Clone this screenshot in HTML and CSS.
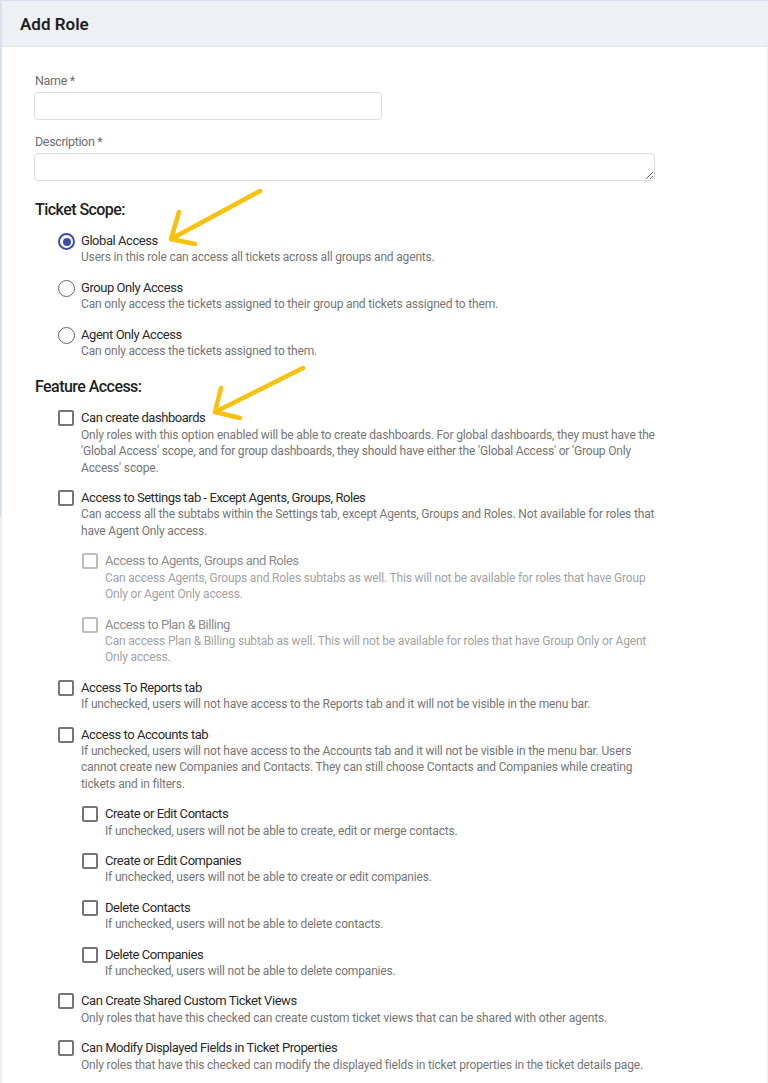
FILE: index.html
```html
<!DOCTYPE html>
<html lang="en">
<head>
    <meta charset="UTF-8">
    <meta name="viewport" content="width=device-width, initial-scale=1.0">
    <title>Add Role</title>
    <link rel="stylesheet" href="styles.css">
</head>
<body>
    <div class="page">
        <div class="header">
            <h1>Add Role</h1>
        </div>

        <form class="role-form">
            <div class="form-group">
                <label class="field-label" for="name">Name *</label>
                <input class="text-input" type="text" id="name">
            </div>
            <div class="form-group">
                <label class="field-label" for="description">Description *</label>
                <textarea class="text-area" id="description" rows="1"></textarea>
            </div>

            <h2 class="section-title">Ticket Scope:</h2>
            <div class="option-list">
                <label class="option">
                    <span class="radio checked"></span>
                    <span class="option-text">
                        <span class="option-title">Global Access</span>
                        <span class="option-desc">Users in this role can access all tickets across all groups and agents.</span>
                    </span>
                </label>
                <label class="option">
                    <span class="radio"></span>
                    <span class="option-text">
                        <span class="option-title">Group Only Access</span>
                        <span class="option-desc">Can only access the tickets assigned to their group and tickets assigned to them.</span>
                    </span>
                </label>
                <label class="option">
                    <span class="radio"></span>
                    <span class="option-text">
                        <span class="option-title">Agent Only Access</span>
                        <span class="option-desc">Can only access the tickets assigned to them.</span>
                    </span>
                </label>
            </div>

            <h2 class="section-title feature">Feature Access:</h2>
            <div class="option-list">
                <label class="option">
                    <span class="checkbox"></span>
                    <span class="option-text">
                        <span class="option-title">Can create dashboards</span>
                        <span class="option-desc">Only roles with this option enabled will be able to create dashboards. For global dashboards, they must have the 'Global Access' scope, and for group dashboards, they should have either the 'Global Access' or 'Group Only Access' scope.</span>
                    </span>
                </label>
                <label class="option">
                    <span class="checkbox"></span>
                    <span class="option-text">
                        <span class="option-title">Access to Settings tab - Except Agents, Groups, Roles</span>
                        <span class="option-desc">Can access all the subtabs within the Settings tab, except Agents, Groups and Roles. Not available for roles that have Agent Only access.</span>
                    </span>
                </label>
                <label class="option sub disabled">
                    <span class="checkbox"></span>
                    <span class="option-text">
                        <span class="option-title">Access to Agents, Groups and Roles</span>
                        <span class="option-desc">Can access Agents, Groups and Roles subtabs as well. This will not be available for roles that have Group Only or Agent Only access.</span>
                    </span>
                </label>
                <label class="option sub disabled">
                    <span class="checkbox"></span>
                    <span class="option-text">
                        <span class="option-title">Access to Plan &amp; Billing</span>
                        <span class="option-desc">Can access Plan &amp; Billing subtab as well. This will not be available for roles that have Group Only or Agent Only access.</span>
                    </span>
                </label>
                <label class="option">
                    <span class="checkbox"></span>
                    <span class="option-text">
                        <span class="option-title">Access To Reports tab</span>
                        <span class="option-desc">If unchecked, users will not have access to the Reports tab and it will not be visible in the menu bar.</span>
                    </span>
                </label>
                <label class="option">
                    <span class="checkbox"></span>
                    <span class="option-text">
                        <span class="option-title">Access to Accounts tab</span>
                        <span class="option-desc">If unchecked, users will not have access to the Accounts tab and it will not be visible in the menu bar. Users cannot create new Companies and Contacts. They can still choose Contacts and Companies while creating tickets and in filters.</span>
                    </span>
                </label>
                <label class="option sub">
                    <span class="checkbox"></span>
                    <span class="option-text">
                        <span class="option-title">Create or Edit Contacts</span>
                        <span class="option-desc">If unchecked, users will not be able to create, edit or merge contacts.</span>
                    </span>
                </label>
                <label class="option sub">
                    <span class="checkbox"></span>
                    <span class="option-text">
                        <span class="option-title">Create or Edit Companies</span>
                        <span class="option-desc">If unchecked, users will not be able to create or edit companies.</span>
                    </span>
                </label>
                <label class="option sub">
                    <span class="checkbox"></span>
                    <span class="option-text">
                        <span class="option-title">Delete Contacts</span>
                        <span class="option-desc">If unchecked, users will not be able to delete contacts.</span>
                    </span>
                </label>
                <label class="option sub">
                    <span class="checkbox"></span>
                    <span class="option-text">
                        <span class="option-title">Delete Companies</span>
                        <span class="option-desc">If unchecked, users will not be able to delete companies.</span>
                    </span>
                </label>
                <label class="option">
                    <span class="checkbox"></span>
                    <span class="option-text">
                        <span class="option-title">Can Create Shared Custom Ticket Views</span>
                        <span class="option-desc">Only roles that have this checked can create custom ticket views that can be shared with other agents.</span>
                    </span>
                </label>
                <label class="option">
                    <span class="checkbox"></span>
                    <span class="option-text">
                        <span class="option-title">Can Modify Displayed Fields in Ticket Properties</span>
                        <span class="option-desc">Only roles that have this checked can modify the displayed fields in ticket properties in the ticket details page.</span>
                    </span>
                </label>
            </div>
        </form>

        <!-- annotation arrows drawn over the form -->
        <svg class="arrows" width="768" height="1083" viewBox="0 0 768 1083">
            <g fill="none" stroke="#f8c10c" stroke-width="4.5" stroke-linecap="round" stroke-linejoin="round">
                <path d="M260 191 L171 239"/>
                <path d="M179 212 L171 239 L195 244"/>
                <path d="M303 368 L215 412"/>
                <path d="M221 388 L215 412 L240 418"/>
            </g>
        </svg>
    </div>
</body>
</html>
```

FILE: styles.css
```css
* {
    box-sizing: border-box;
}
body {
    margin: 0;
    font-family: Roboto, 'Liberation Sans', sans-serif;
    background: #fff;
    color: #333;
}
.page {
    position: relative;
    min-height: 1083px;
    border-left: 2px solid;
    border-image: linear-gradient(to bottom, #dcdff0 517px, #f0f0f2 517px) 1;
    border-right: 0;
    border-top: 0;
    border-bottom: 0;
}
.header {
    height: 47px;
    background-color: #eff0f5;
    border-top: 1px solid #d9dcee;
    border-bottom: 1px solid #e2e3e9;
    padding-left: 18px;
    display: flex;
    align-items: center;
}
.header h1 {
    margin: 0;
    font-size: 17px;
    font-weight: 600;
    color: #1f1f1f;
}
.role-form {
    width: 766px;
    padding: 26px 106px 20px 32px;
    border-right: 1px solid #f0f0f0;
    min-height: 1036px;
}
.form-group {
    margin-bottom: 14px;
}
.field-label {
    display: block;
    font-size: 12.5px;
    line-height: 16px;
    letter-spacing: -0.35px;
    color: #6e6e6e;
    margin-bottom: 3px;
    padding-left: 1px;
}
.text-input, .text-area {
    display: block;
    height: 28px;
    border: 1px solid #dcdcdc;
    border-radius: 4px;
    font-family: inherit;
    font-size: 13px;
    padding: 4px 8px;
    background: #fff;
}
.text-input {
    width: 348px;
}
.text-area {
    width: 621px;
    resize: vertical;
}
.section-title {
    margin: 19px 0 13px;
    padding-left: 1px;
    font-size: 16px;
    line-height: 20px;
    font-weight: 500;
    letter-spacing: -0.55px;
    color: #222;
}
.section-title.feature {
    margin-top: 18px;
}
.option-list {
    display: flex;
    flex-direction: column;
    gap: 14px;
    padding-left: 24px;
}
.option {
    display: flex;
    align-items: flex-start;
    gap: 7px;
}
.option.sub {
    padding-left: 24px;
}
.option-text {
    display: flex;
    flex-direction: column;
}
.option-title {
    font-size: 13px;
    line-height: 16.4px;
    letter-spacing: -0.45px;
    color: #2b2b2b;
}
.option-desc {
    font-size: 12px;
    line-height: 16.4px;
    letter-spacing: -0.17px;
    color: #767676;
}
.option.disabled .option-title {
    color: #8d8d8d;
}
.option.disabled .option-desc {
    color: #a3a3a3;
}
.radio {
    flex: none;
    width: 17px;
    height: 17px;
    margin-top: 0;
    margin-right: -1px;
    border: 1.5px solid #666;
    border-radius: 50%;
    position: relative;
}
.radio.checked {
    border: 2px solid #3f4cb0;
}
.radio.checked::after {
    content: "";
    position: absolute;
    left: 2.5px;
    top: 2.5px;
    width: 8px;
    height: 8px;
    border-radius: 50%;
    background: #3f4cb0;
}
.checkbox {
    flex: none;
    width: 16px;
    height: 16px;
    margin-top: 0;
    border: 2px solid #767676;
    border-radius: 2px;
}
.option.disabled .checkbox {
    border-color: #bdbdbd;
}
.arrows {
    position: absolute;
    left: -2px;
    top: 0;
    pointer-events: none;
}
```
